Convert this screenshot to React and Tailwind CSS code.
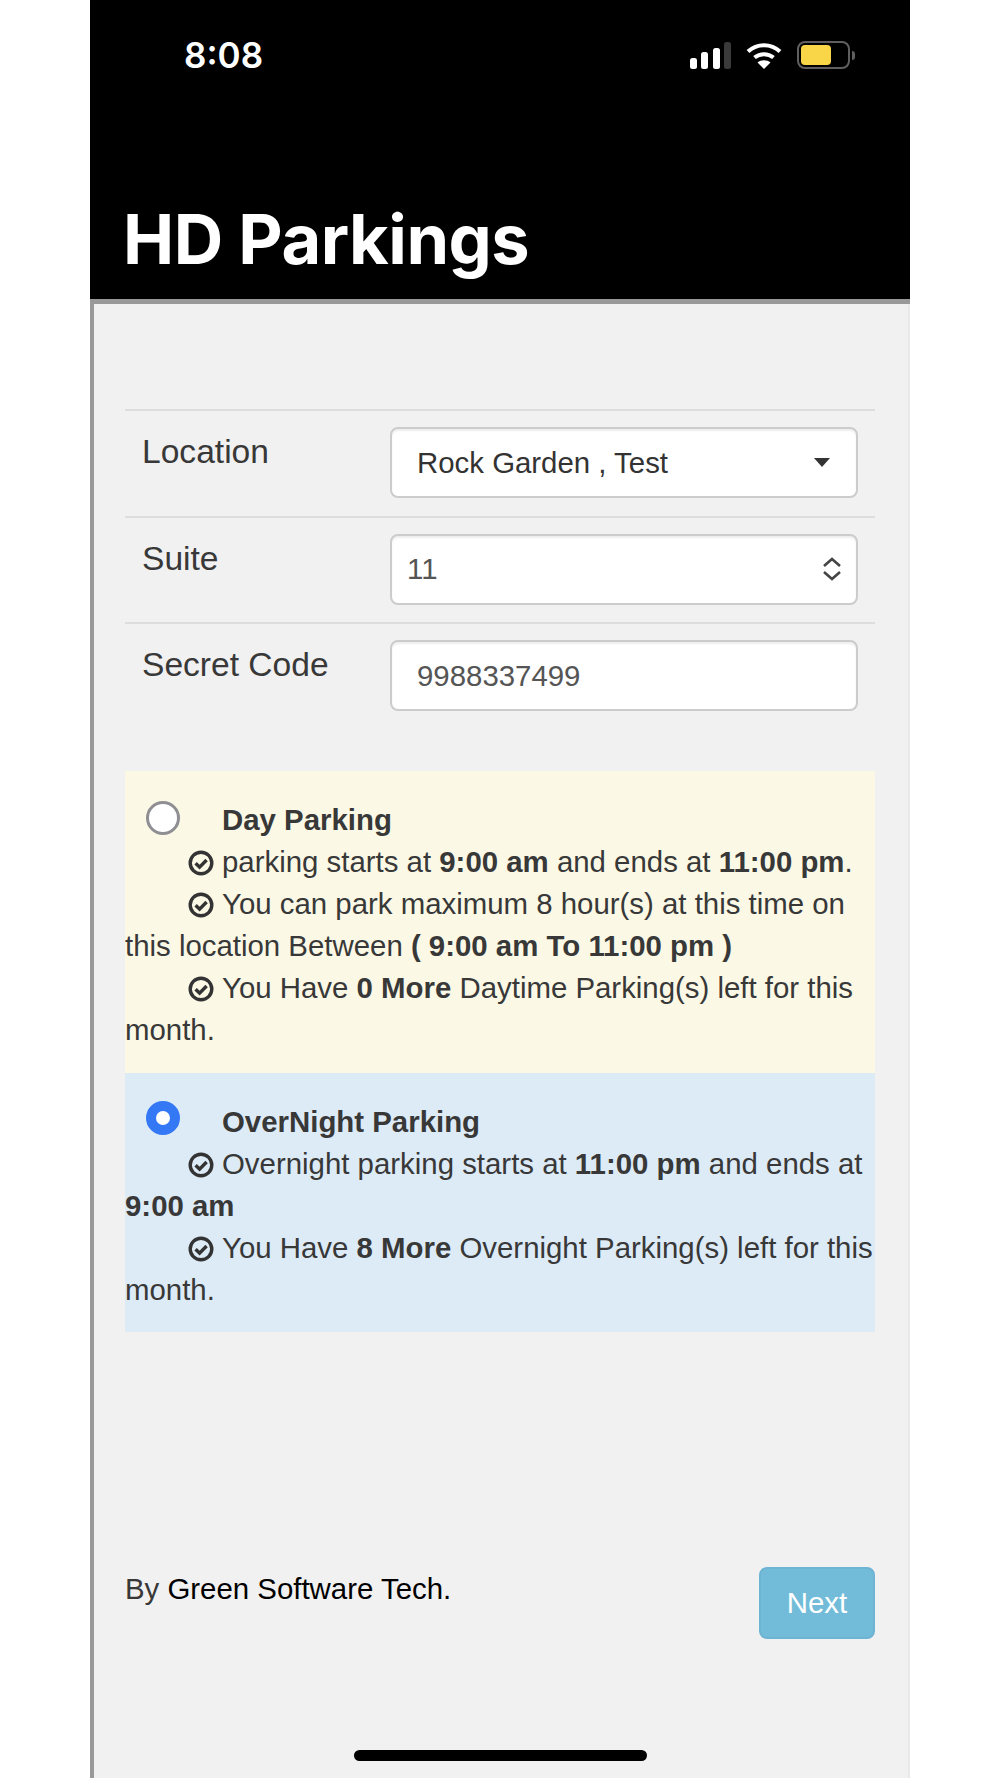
import React from "react";

const inter = "font-['Inter',sans-serif]";

const StatusIcons = () => (
  <div className="flex items-center gap-[15px]">
    {/* signal */}
    <svg width="41" height="27" viewBox="0 0 41 27">
      <rect x="0" y="16" width="7" height="11" rx="2.5" fill="#fff" />
      <rect x="11" y="10" width="7" height="17" rx="2.5" fill="#fff" />
      <rect x="23" y="6" width="7" height="21" rx="2.5" fill="#fff" />
      <rect x="34" y="0" width="7" height="27" rx="2.5" fill="#3a3a3a" />
    </svg>
    {/* wifi */}
    <svg width="36" height="27" viewBox="0 0 36 27">
      <path d="M2 9.5 C11 1 25 1 34 9.5" fill="none" stroke="#fff" strokeWidth="4" />
      <path d="M8.5 15.5 C14 11 22 11 27.5 15.5" fill="none" stroke="#fff" strokeWidth="4" />
      <path d="M18 27 L11.5 20.5 C15 17.5 21 17.5 24.5 20.5 Z" fill="#fff" />
    </svg>
    {/* battery */}
    <div className="flex items-center gap-[2px]">
      <div className="w-[53px] h-[28px] rounded-[8px] border-2 border-[#5f5f5f] p-[2px] flex">
        <div className="w-[30px] rounded-[4px] bg-[#f9d548]" />
      </div>
      <div className="w-[3px] h-[9px] rounded-r-full bg-[#5f5f5f]" />
    </div>
  </div>
);

const FormRow = ({ label, children }) => (
  <div className="flex border-t-2 border-[#dddddd] pt-[16px] pb-[17.5px] pl-[17px] pr-[17px]">
    <label className="w-[248px] pt-[1px] text-[33.6px] leading-[48px] text-[#383838]">{label}</label>
    <div className="flex-1">{children}</div>
  </div>
);

const boxClass =
  "h-[71px] w-full flex items-center justify-between rounded-[8px] border-2 border-[#cccccc] bg-white shadow-[inset_0_2px_2px_rgba(0,0,0,0.07)] text-[29.4px]";

const Check = () => (
  <svg width="26" height="26" viewBox="0 0 26 26" fill="none" stroke="#333333" strokeWidth="3.4" className="inline-block mr-[8px] align-[-4px]">
    <circle cx="13" cy="13" r="10.8" />
    <path d="M7.6 13.2 L11.6 17.2 L18.6 10" />
  </svg>
);

const App = () => {
  return (
    <div className="w-full h-[1778px] bg-white font-['Liberation_Sans',Arial,sans-serif]">
      <div className="mx-auto w-[820px] h-full flex flex-col">
        {/* Header */}
        <header className="h-[304px] bg-black border-b-[5px] border-[#999999] pl-[33px] pr-[35px] flex flex-col shrink-0">
          <div className="flex items-center justify-between pt-[34px] pl-[61px] pr-[20px]">
            <span className={`${inter} text-[35px] leading-[42px] font-semibold text-white`}>8:08</span>
            <StatusIcons />
          </div>
          <h1 className={`${inter} mt-[123px] text-[68.5px] leading-[82px] font-bold text-white tracking-[-0.5px]`}>
            HD Parkings
          </h1>
        </header>

        {/* Body */}
        <main className="flex-1 flex flex-col bg-[#f1f1f1] border-l-4 border-r-2 border-l-[#999999] border-r-[#e8e8e8] pl-[31px] pr-[33px]">
          <section className="pt-[105px]">
            <FormRow label="Location">
              <div className={`${boxClass} pl-[25px] pr-[26px] text-[#333333]`}>
                <span className="pt-[1px]">Rock Garden , Test</span>
                <svg width="16" height="9" viewBox="0 0 16 9">
                  <path d="M0 0 H16 L8 9 Z" fill="#333333" />
                </svg>
              </div>
            </FormRow>
            <FormRow label="Suite">
              <div className={`${boxClass} pl-[15px] pr-[14px] text-[#555555]`}>
                <span className="pt-[1px]">11</span>
                <svg width="20" height="24" viewBox="0 0 20 24" fill="none" stroke="#444444" strokeWidth="2.6">
                  <path d="M2 9 L10 2 L18 9" />
                  <path d="M2 15 L10 22 L18 15" />
                </svg>
              </div>
            </FormRow>
            <FormRow label="Secret Code">
              <input
                readOnly
                value="9988337499"
                className={`${boxClass} pl-[25px] pt-[1px] outline-none text-[#555555]`}
              />
            </FormRow>
          </section>

          {/* Parking options */}
          <section className="mt-[42.5px] text-[29.4px] leading-[42px] text-[#383838]">
            <div className="bg-[#fbf8e6] pt-[28px] pb-[22px]">
              <div className="flex items-center pl-[21px] h-[42px]">
                <span className="w-[34px] h-[34px] -mt-[4px] rounded-full border-[3px] border-[#8e8e93] bg-white shrink-0" />
                <b className="ml-[42px]">Day Parking</b>
              </div>
              <p className="indent-[63px]">
                <Check />parking starts at <b>9:00 am</b> and ends at <b>11:00 pm</b>.
              </p>
              <p className="indent-[63px]">
                <Check />You can park maximum 8 hour(s) at this time on this location Between <b>( 9:00 am To 11:00 pm )</b>
              </p>
              <p className="indent-[63px]">
                <Check />You Have <b>0 More</b> Daytime Parking(s) left for this month.
              </p>
            </div>
            <div className="bg-[#ddebf7] pt-[28px] pb-[21px]">
              <div className="flex items-center pl-[21px] h-[42px]">
                <span className="w-[34px] h-[34px] -mt-[8px] rounded-full border-[10px] border-[#3478f6] bg-white shrink-0" />
                <b className="ml-[42px]">OverNight Parking</b>
              </div>
              <p className="indent-[63px]">
                <Check />Overnight parking starts at <b>11:00 pm</b> and ends at <b>9:00 am</b>
              </p>
              <p className="indent-[63px]">
                <Check />You Have <b>8 More</b> Overnight Parking(s) left for this month.
              </p>
            </div>
          </section>

          {/* Footer */}
          <footer className="mt-[235px] flex items-start justify-between text-[29.4px] leading-[42px]">
            <p className="pt-[1px] text-[#383838]">
              By <span className="text-black">Green Software Tech.</span>
            </p>
            <button className="w-[116px] h-[72px] rounded-[8px] border-2 border-[#6db3d3] bg-[#72bcd9] text-white">
              Next
            </button>
          </footer>

          <div className="mt-auto mb-[17px] mx-auto w-[293px] h-[11px] rounded-full bg-black" />
        </main>
      </div>
    </div>
  );
};

export default App;
